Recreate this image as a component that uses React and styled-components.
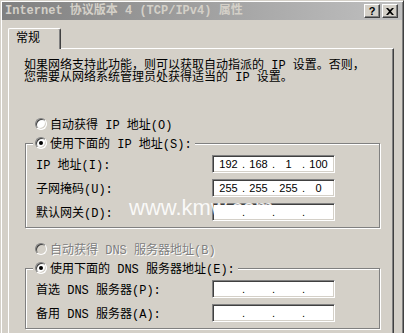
import React from "react";
import styled, { createGlobalStyle } from "styled-components";

const Global = createGlobalStyle`
  html, body { margin: 0; padding: 0; width: 404px; height: 333px; overflow: hidden; background: #d4d0c8; }
  #root { width: 404px; height: 333px; overflow: hidden; }
`;

const CJK = `"Liberation Mono", "Noto Sans CJK SC", monospace`;

const Window = styled.div`
  position: relative;
  box-sizing: border-box;
  width: 404px;
  min-height: 345px;
  background: #d4d0c8;
  border: 1px solid;
  border-color: #d4d0c8 #404040 #404040 #d4d0c8;
  box-shadow: inset 1px 1px 0 #fff, inset -1px -1px 0 #808080;
  padding: 1px;
  font-family: ${CJK};
  font-size: 12px;
  color: #000;
`;

const TitleBar = styled.div`
  height: 18px;
  display: flex;
  align-items: center;
  background: linear-gradient(to right, #808080, #c0c0c0);
  padding: 0 4px 0 3px;
`;

const Title = styled.div`
  flex: 1;
  font-weight: bold;
  font-size: 12px;
  line-height: 18px;
  color: #d4d0c8;
  white-space: nowrap;
`;

const CapButtons = styled.div`
  display: flex;
  gap: 2px;
`;

const CapButton = styled.div`
  box-sizing: border-box;
  width: 16px;
  height: 14px;
  background: #d4d0c8;
  border: 1px solid;
  border-color: #fff #404040 #404040 #fff;
  box-shadow: inset -1px -1px 0 #808080;
  display: flex;
  align-items: center;
  justify-content: center;
  font-family: "Liberation Sans", sans-serif;
  font-weight: bold;
  font-size: 11px;
  line-height: 12px;
  color: #000;
`;

const Body = styled.div`
  padding: 8px 7px 0 6px;
`;

const TabStrip = styled.div`
  display: flex;
`;

const Tab = styled.div`
  position: relative;
  z-index: 1;
  box-sizing: border-box;
  width: 53px;
  height: 21px;
  margin-bottom: -1px;
  background: #d4d0c8;
  border-top: 1px solid #fff;
  border-left: 1px solid #fff;
  border-right: 1px solid #404040;
  border-top-left-radius: 2px;
  border-top-right-radius: 2px;
  box-shadow: inset -1px 0 0 #808080;
  padding: 2px 0 0 7px;
  font-size: 12px;
  line-height: 16px;
`;

const Panel = styled.div`
  box-sizing: border-box;
  width: 386px;
  min-height: 300px;
  border-top: 1px solid #fff;
  border-left: 1px solid #fff;
  border-right: 1px solid #404040;
  box-shadow: inset -1px 0 0 #808080;
  padding: 11px 13px 20px 16px;
`;

const Intro = styled.p`
  margin: 0;
  font-size: 12px;
  line-height: 12px;
  white-space: nowrap;
  margin-left: -1px;
`;

const RadioRow = styled.div`
  display: flex;
  align-items: center;
  height: 14px;
  padding-left: 10px;
  margin-top: ${(p) => p.$mt || 0}px;
  color: ${(p) => (p.$disabled ? "#808080" : "#000")};
  text-shadow: ${(p) => (p.$disabled ? "1px 1px 0 #fff" : "none")};
  white-space: nowrap;
`;

const Circle = styled.span`
  box-sizing: border-box;
  width: 12px;
  height: 12px;
  flex: none;
  border-radius: 50%;
  border: 1px solid;
  border-color: #808080 #fff #fff #808080;
  box-shadow: inset 1px 1px 0 #404040, inset -1px -1px 0 #d4d0c8;
  background: ${(p) => (p.$disabled ? "#d4d0c8" : "#fff")};
  display: flex;
  align-items: center;
  justify-content: center;
  margin-right: 3px;
`;

const Dot = styled.span`
  width: 4px;
  height: 4px;
  border-radius: 50%;
  background: #000;
`;

const Group = styled.fieldset`
  box-sizing: border-box;
  width: 355px;
  margin: 5px 0 0 0;
  padding: 5px 0 6px 10px;
  border: 1px solid #808080;
  box-shadow: 1px 1px 0 #fff, inset 1px 1px 0 #fff;
  min-inline-size: auto;
`;

const Legend = styled.legend`
  margin-left: -3px;
  padding: 0 3px 0 2px;
  background: #d4d0c8;
  display: flex;
  align-items: center;
  height: 14px;
  white-space: nowrap;
`;

const Rows = styled.div`
  display: flex;
  flex-direction: column;
  gap: 6px;
`;

const FieldRow = styled.div`
  display: grid;
  grid-template-columns: 176px 123px;
  align-items: center;
  height: 18px;
  white-space: nowrap;
`;

const IpBox = styled.div`
  box-sizing: border-box;
  width: 123px;
  height: 18px;
  background: #fff;
  border: 1px solid;
  border-color: #808080 #fff #fff #808080;
  box-shadow: inset 1px 1px 0 #404040, inset -1px -1px 0 #d4d0c8;
  display: flex;
  align-items: center;
  padding-left: 2px;
  font-family: "Liberation Sans", Arial, sans-serif;
  font-size: 11px;
  line-height: 14px;
`;

const Octet = styled.span`
  width: 27px;
  text-align: center;
`;

const Sep = styled.span`
  width: 3px;
  text-align: center;
`;

const Watermark = styled.div`
  position: absolute;
  left: 128px;
  top: 196px;
  font-family: "Liberation Sans", Arial, sans-serif;
  font-size: 22px;
  line-height: 22px;
  color: rgba(255, 255, 255, 0.88);
  white-space: nowrap;
  pointer-events: none;
`;

function Radio({ checked, disabled }) {
  return (
    <Circle $disabled={disabled}>{checked && <Dot />}</Circle>
  );
}

function IpField({ values }) {
  return (
    <IpBox>
      {values.map((v, i) => (
        <React.Fragment key={i}>
          {i > 0 && <Sep>.</Sep>}
          <Octet>{v}</Octet>
        </React.Fragment>
      ))}
    </IpBox>
  );
}

const empty = ["", "", "", ""];

export default function App() {
  return (
    <>
      <Global />
      <Window>
        <TitleBar>
          <Title>Internet 协议版本 4 (TCP/IPv4) 属性</Title>
          <CapButtons>
            <CapButton>?</CapButton>
            <CapButton>
              <svg width="8" height="7" viewBox="0 0 8 7">
                <path d="M0 0h2l2 2 2-2h2L5 3.5 8 7H6L4 5 2 7H0l3-3.5z" fill="#000" />
              </svg>
            </CapButton>
          </CapButtons>
        </TitleBar>
        <Body>
          <TabStrip>
            <Tab>常规</Tab>
          </TabStrip>
          <Panel>
            <Intro>
              如果网络支持此功能，则可以获取自动指派的 IP 设置。否则，
              <br />
              您需要从网络系统管理员处获得适当的 IP 设置。
            </Intro>
            <RadioRow $mt={33}>
              <Radio />
              自动获得 IP 地址(O)
            </RadioRow>
            <Group>
              <Legend>
                <Radio checked />
                使用下面的 IP 地址(S):
              </Legend>
              <Rows>
                <FieldRow>
                  <span>IP 地址(I):</span>
                  <IpField values={["192", "168", "1", "100"]} />
                </FieldRow>
                <FieldRow>
                  <span>子网掩码(U):</span>
                  <IpField values={["255", "255", "255", "0"]} />
                </FieldRow>
                <FieldRow>
                  <span>默认网关(D):</span>
                  <IpField values={empty} />
                </FieldRow>
              </Rows>
            </Group>
            <RadioRow $mt={14} $disabled>
              <Radio disabled />
              自动获得 DNS 服务器地址(B)
            </RadioRow>
            <Group>
              <Legend>
                <Radio checked />
                使用下面的 DNS 服务器地址(E):
              </Legend>
              <Rows>
                <FieldRow>
                  <span>首选 DNS 服务器(P):</span>
                  <IpField values={empty} />
                </FieldRow>
                <FieldRow>
                  <span>备用 DNS 服务器(A):</span>
                  <IpField values={empty} />
                </FieldRow>
              </Rows>
            </Group>
          </Panel>
        </Body>
        <Watermark>www.kmw.com</Watermark>
      </Window>
    </>
  );
}
